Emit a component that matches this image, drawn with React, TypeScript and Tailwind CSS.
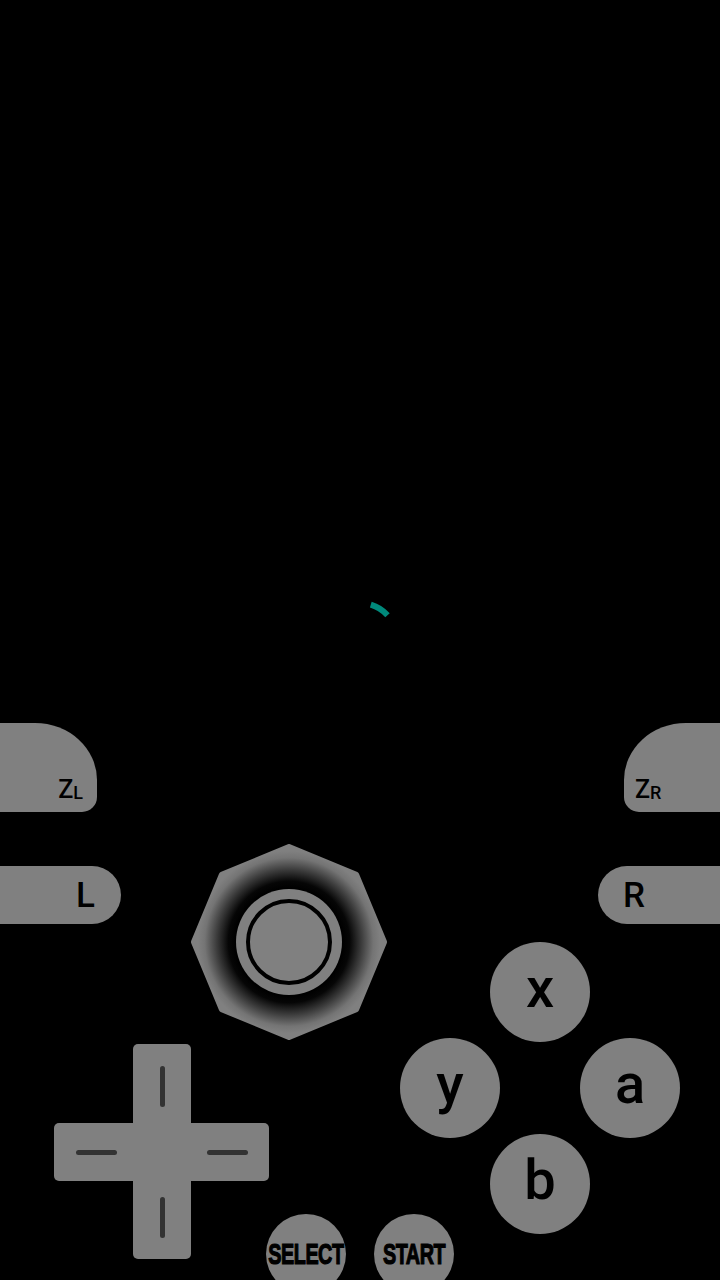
import React from 'react';

const GRAY = 'bg-[#808080]';

function FaceButton({ label, className }: { label: string; className: string }) {
  return (
    <div
      className={`absolute w-[100px] h-[100px] rounded-full ${GRAY} flex items-center justify-center ${className}`}
    >
      <span className="text-[56px] leading-none font-medium text-black -mt-2 [font-family:Roboto,'Open_Sans',sans-serif]">
        {label}
      </span>
    </div>
  );
}

function SmallButton({ label, className }: { label: string; className: string }) {
  return (
    <div
      className={`absolute top-[1214px] w-[80px] h-[80px] rounded-full ${GRAY} flex justify-center pt-[25px] ${className}`}
    >
      <span className="block text-[30px] leading-[30px] font-bold text-black tracking-tight scale-x-[0.66] [-webkit-text-stroke:1.2px_black] [font-family:'Liberation_Sans',Arial,sans-serif]">
        {label}
      </span>
    </div>
  );
}

function Joystick() {
  // regular octagon, vertices every 45deg, centred at (98, 98)
  const pts = Array.from({ length: 8 }, (_, i) => {
    const a = (i * Math.PI) / 4 - Math.PI / 2;
    return `${(98 + 95 * Math.cos(a)).toFixed(1)},${(98 + 95 * Math.sin(a)).toFixed(1)}`;
  }).join(' ');

  return (
    <div className="absolute left-[191px] top-[844px] w-[196px] h-[196px]">
      <svg width="196" height="196" viewBox="0 0 196 196" className="absolute inset-0">
        <defs>
          <radialGradient id="stickBase" cx="98" cy="98" r="98" gradientUnits="userSpaceOnUse">
            <stop offset="0.55" stopColor="#000" />
            <stop offset="0.62" stopColor="#060606" />
            <stop offset="0.74" stopColor="#3c3c3c" />
            <stop offset="0.86" stopColor="#747474" />
            <stop offset="0.93" stopColor="#808080" />
            <stop offset="1" stopColor="#808080" />
          </radialGradient>
        </defs>
        <polygon points={pts} fill="url(#stickBase)" stroke="url(#stickBase)" strokeWidth="6" strokeLinejoin="round" />
      </svg>
      <div className="absolute left-[45px] top-[45px] w-[106px] h-[106px] rounded-full bg-[#808080] flex items-center justify-center">
        <div className="w-[86px] h-[86px] rounded-full border-[4px] border-black bg-[#808080]" />
      </div>
    </div>
  );
}

function DPad() {
  const line = 'bg-[#333333] rounded-full';
  return (
    <div className="absolute left-[54px] top-[1044px] grid grid-cols-[79px_58px_78px] grid-rows-[79px_58px_78px]">
      <div />
      <div className={`${GRAY} rounded-t-[5px] flex justify-center pt-[22px]`}>
        <div className={`w-[5px] h-[41px] ${line}`} />
      </div>
      <div />
      <div className={`${GRAY} rounded-l-[5px] flex items-center pl-[22px]`}>
        <div className={`w-[41px] h-[5px] ${line}`} />
      </div>
      <div className={GRAY} />
      <div className={`${GRAY} rounded-r-[5px] flex items-center justify-end pr-[21px]`}>
        <div className={`w-[41px] h-[5px] ${line}`} />
      </div>
      <div />
      <div className={`${GRAY} rounded-b-[5px] flex justify-center items-end pb-[21px]`}>
        <div className={`w-[5px] h-[41px] ${line}`} />
      </div>
      <div />
    </div>
  );
}

export default function App() {
  const label = "text-black font-medium [font-family:Roboto,'Open_Sans',sans-serif]";
  return (
    <div className="relative w-[720px] h-[1280px] bg-black overflow-hidden">
      {/* loading spinner */}
      <svg className="absolute left-[320px] top-[600px]" width="80" height="80" viewBox="320 600 80 80">
        <path d="M370.8 604.6 A37 37 0 0 1 387.5 615.2" fill="none" stroke="#00897b" strokeWidth="6" />
      </svg>

      {/* shoulder triggers */}
      <div className={`absolute left-0 top-[723px] w-[97px] h-[89px] ${GRAY} rounded-tr-[62px_57px] rounded-br-[15px] flex items-end justify-end pr-[14px] pb-[10px]`}>
        <span className={`${label} text-[25px] leading-none`}>Z</span>
        <span className={`${label} text-[18px] leading-none`}>L</span>
      </div>
      <div className={`absolute right-0 top-[723px] w-[96px] h-[89px] ${GRAY} rounded-tl-[62px_57px] rounded-bl-[15px] flex items-end pl-[11px] pb-[10px]`}>
        <span className={`${label} text-[25px] leading-none`}>Z</span>
        <span className={`${label} text-[18px] leading-none`}>R</span>
      </div>

      {/* bumpers */}
      <div className={`absolute left-0 top-[866px] w-[121px] h-[58px] ${GRAY} rounded-r-full flex items-center justify-end pr-[26px]`}>
        <span className={`${label} text-[35px] leading-none`}>L</span>
      </div>
      <div className={`absolute right-0 top-[866px] w-[122px] h-[58px] ${GRAY} rounded-l-full flex items-center pl-[25px]`}>
        <span className={`${label} text-[35px] leading-none`}>R</span>
      </div>

      <Joystick />
      <DPad />

      <FaceButton label="x" className="left-[490px] top-[942px]" />
      <FaceButton label="y" className="left-[400px] top-[1038px]" />
      <FaceButton label="a" className="left-[580px] top-[1038px]" />
      <FaceButton label="b" className="left-[490px] top-[1134px]" />

      <SmallButton label="SELECT" className="left-[266px]" />
      <SmallButton label="START" className="left-[374px]" />
    </div>
  );
}
